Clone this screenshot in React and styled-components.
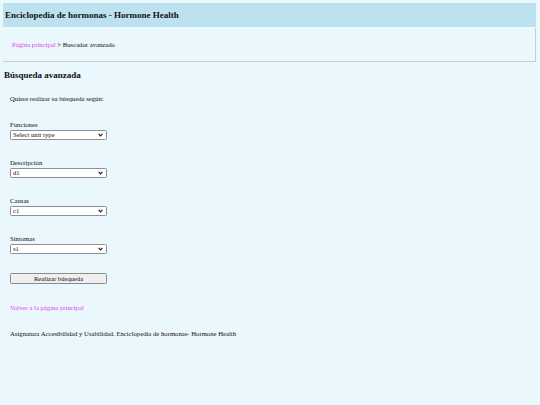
import React from 'react';
import styled, { createGlobalStyle } from 'styled-components';

const pageBg = '#eaf7fd';
const headerBg = '#bde2ef';
const linkColor = '#e046ea';
const serif = '"Liberation Serif", "Times New Roman", serif';

const GlobalStyle = createGlobalStyle`
  html, body {
    margin: 0;
    padding: 0;
    background: ${pageBg};
  }
  body {
    font-family: ${serif};
    color: #111;
    min-height: 405px;
  }
`;

const Page = styled.div`
  padding: 3px 4px 0 3px;
`;

const Header = styled.header`
  height: 24px;
  display: flex;
  align-items: center;
  background: ${headerBg};
  padding-left: 2px;
`;

const Title = styled.h1`
  margin: 0;
  font-size: 9px;
  font-weight: bold;
`;

const Breadcrumb = styled.nav`
  height: 33px;
  display: flex;
  align-items: center;
  margin-top: 1px;
  padding-left: 9px;
  border-right: 1px solid #c7ced3;
  border-bottom: 1px solid #c7ced3;
  font-size: 6.7px;
`;

const Link = styled.a`
  color: ${linkColor};
  text-decoration: none;
`;

const Main = styled.main`
  padding-top: 8px;
`;

const Heading = styled.h2`
  margin: 0 0 15px 1px;
  font-size: 9px;
  line-height: 10px;
  font-weight: bold;
`;

const Content = styled.div`
  padding-left: 7px;
  font-size: 6.7px;
`;

const Text = styled.p`
  margin: 0 0 ${props => props.gap || 0}px;
  line-height: 8px;
`;

const Field = styled.div`
  display: flex;
  flex-direction: column;
  align-items: flex-start;
  margin-bottom: 19px;
`;

const Label = styled.label`
  line-height: 8px;
`;

const SelectWrap = styled.div`
  position: relative;
  margin-top: 1px;
  width: 97px;
`;

const Select = styled.select`
  appearance: none;
  width: 100%;
  height: 10px;
  margin: 0;
  padding: 0 0 0 2px;
  background: #fff;
  border: 1px solid #8f8f8f;
  border-radius: 1.5px;
  font-family: ${serif};
  font-size: 6.7px;
  color: #111;
  line-height: 8px;
  box-sizing: border-box;
`;

const Arrow = styled.svg`
  position: absolute;
  right: 4px;
  top: 3px;
  width: 5px;
  height: 4px;
  pointer-events: none;
`;

const Button = styled.button`
  display: block;
  width: 97px;
  height: 11px;
  margin: 2px 0 20px;
  padding: 0;
  background: #efefef;
  border: 1px solid #8a8a8a;
  border-radius: 1.5px;
  font-family: ${serif};
  font-size: 6.7px;
  color: #111;
  box-sizing: border-box;
`;

const Chevron = () => (
  <Arrow viewBox="0 0 5 4">
    <path d="M0.6 0.8 L2.5 2.9 L4.4 0.8" fill="none" stroke="#222" strokeWidth="1.2" />
  </Arrow>
);

const Dropdown = ({ label, options }) => (
  <Field>
    <Label>{label}</Label>
    <SelectWrap>
      <Select defaultValue={options[0]}>
        {options.map(o => <option key={o}>{o}</option>)}
      </Select>
      <Chevron />
    </SelectWrap>
  </Field>
);

const fields = [
  { label: 'Funciones', options: ['Select unit type'] },
  { label: 'Descripción', options: ['d1'] },
  { label: 'Causas', options: ['c1'] },
  { label: 'Sintomas', options: ['s1'] },
];

export default function App() {
  return (
    <Page>
      <GlobalStyle />
      <Header>
        <Title>Enciclopedia de hormonas - Hormone Health</Title>
      </Header>
      <Breadcrumb>
        <Link href="#">Página principal</Link>&nbsp;&gt; Buscador avanzado
      </Breadcrumb>
      <Main>
        <Heading>Búsqueda avanzada</Heading>
        <Content>
          <Text gap={18}>Quiere realizar su búsqueda según:</Text>
          {fields.map(f => <Dropdown key={f.label} {...f} />)}
          <Button>Realizar búsqueda</Button>
          <Text gap={18}><Link href="#">Volver a la página principal</Link></Text>
          <Text>Asignatura Accesibilidad y Usabilidad. Enciclopedia de hormonas- Hormone Health</Text>
        </Content>
      </Main>
    </Page>
  );
}
